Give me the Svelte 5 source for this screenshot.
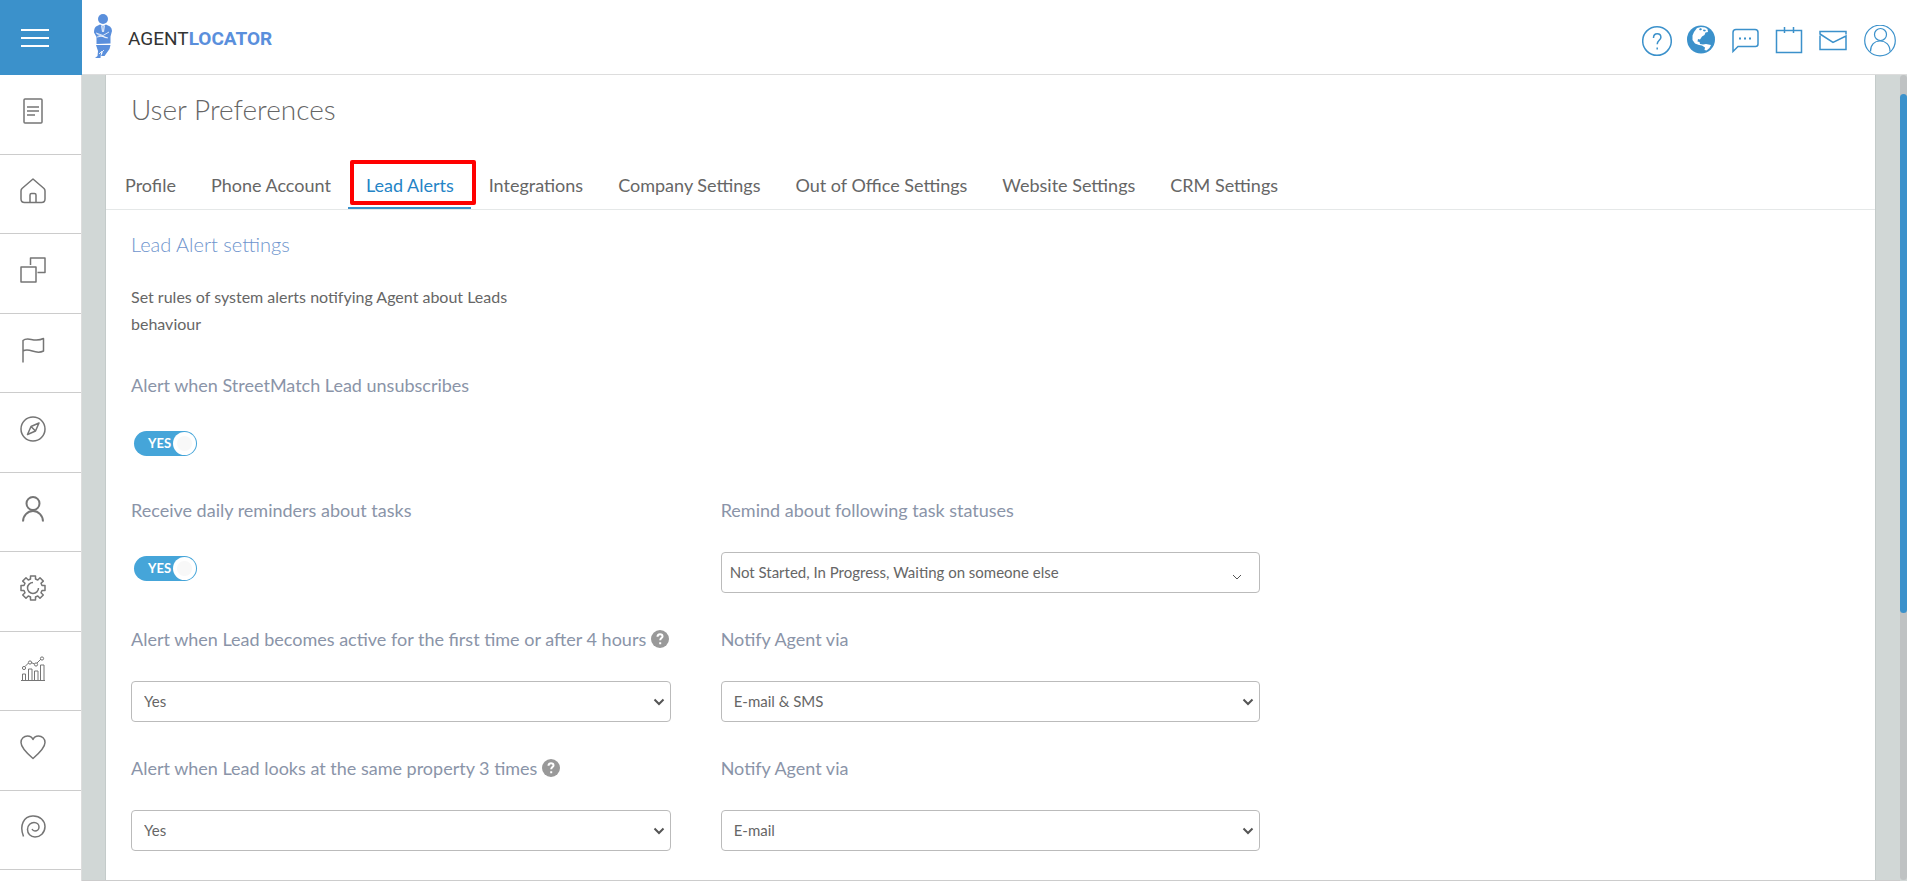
<script>
	let active = $state('Lead Alerts')
	let unsubscribeAlert = $state(true)
	let dailyReminders = $state(true)

	const tabs = [
		'Profile',
		'Phone Account',
		'Lead Alerts',
		'Integrations',
		'Company Settings',
		'Out of Office Settings',
		'Website Settings',
		'CRM Settings'
	]

	const menu = [
		'Pages',
		'Home',
		'Listings',
		'Campaigns',
		'Explore',
		'Contacts',
		'Settings',
		'Reports',
		'Favourites',
		'Activity'
	]

	const alerts = [
		{
			id: 'active',
			text: 'Alert when Lead becomes active for the first time or after 4 hours',
			via: 'E-mail & SMS'
		},
		{ id: 'property', text: 'Alert when Lead looks at the same property 3 times', via: 'E-mail' }
	]

	const answers = ['Yes', 'No']
	const channels = ['E-mail & SMS', 'E-mail', 'SMS']
</script>

{#snippet menuIcon(name)}
	<svg class="menu-icon" viewBox="0 0 26 26" aria-hidden="true">
		{#if name === 'Pages'}
			<rect x="4" y="1" width="18" height="24" rx="1" />
			<path d="M7 9h12M7 13h12M7 17h8" />
		{:else if name === 'Home'}
			<path d="M13 1 2 10.5Q1 11.5 1 13v8q0 3.5 3.5 3.5h17Q25 24.5 25 21v-8q0-1.500-1-2.500ZM10 24.500V17q0-1.500 1.500-1.500h3Q16 15.500 16 17v7.500" />
		{:else if name === 'Listings'}
			<rect x="1" y="10" width="15" height="15" />
			<path d="M10.5 8V1H25v14.5h-7.5" />
		{:else if name === 'Campaigns'}
			<path d="M3 25.5V3.500C8-1 14 6 23.500 1.500V14C15 18.500 10 10 3 14" />
		{:else if name === 'Explore'}
			<circle cx="13" cy="13" r="12" />
			<path d="M19 7 11 10.5 7.5 18.5 15.5 15ZM11 10.5l4.5 4.5" />
		{:else if name === 'Contacts'}
			<g stroke-width="2">
				<circle cx="13" cy="7.5" r="6.5" />
				<path d="M3 25.500a10 10.500 0 0 1 20 0" />
			</g>
		{:else if name === 'Settings'}
			<path d="M10.5 1h5v3l2.300 1 2.200-2.200 3.300 3.300L21 8.300l1 2.200h3v5h-3l-1 2.300 2.300 2.200-3.300 3.300-2.200-2.300-2.300 1v3h-5v-3l-2.200-1L6 23.300 2.700 20 5 17.800l-1-2.300H1v-5h3l1-2.200-2.300-2.200L6 2.800 8.300 5l2.200-1Z" />
			<path d="M13 7.5A5.5 5.5 0 1 0 18.5 13" />
		{:else if name === 'Reports'}
			<g stroke-width="1">
				<path d="M1 25.5h24M2.5 25v-6h3v6M8.500 25V14h3.500v11M14.500 25v-9h3.500v9M20.500 25V10H24v15M5 11.500l3.500-3.500M11 7.500l3.500 1.500M17 8l4-4" />
				<circle cx="4" cy="13" r="1.6" />
				<circle cx="10" cy="7.5" r="1.6" />
				<circle cx="16" cy="9.5" r="1.6" />
				<circle cx="22" cy="3.5" r="1.6" />
			</g>
		{:else if name === 'Favourites'}
			<path d="M13 24.5C6 18.500 1 13.500 1 8.500 1 4.500 4 2 7.500 2c2.500 0 4.500 1 5.500 3.500C14 3 16 2 18.500 2 22 2 25 4.500 25 8.500c0 5-5 10-12 16Z" />
		{:else}
			<path d="M3.500 22.500C-1 11 4 2.500 12.500 2 20 1.500 25 7 25 12.500 25 19 20 23 15 23 10.500 23 7.500 19.500 7.500 15.500 7.500 11 11 8.500 14 8.500 17 8.500 19 10.500 19 13c0 2.500-2 4-4 4-1.500 0-2.500-1-3-2" />
		{/if}
	</svg>
{/snippet}

{#snippet help()}
	<svg class="help" viewBox="0 0 18 18" role="img" aria-label="Help">
		<circle cx="9" cy="9" r="9" />
		<path d="M6.5 6.8C6.5 5 7.6 4.2 9 4.2c1.500 0 2.500.9 2.500 2.200C11.500 8 9.200 8.300 9.200 10.200M9.200 12.200v2" />
	</svg>
{/snippet}

{#snippet dropdown(id, options, value)}
	<div class="select">
		<select {id}>
			{#each options as option}
				<option selected={option === value}>{option}</option>
			{/each}
		</select>
		<svg class="arrow" viewBox="0 0 12 8" aria-hidden="true"><path d="M1.5 1.5 6 6l4.5-4.5" /></svg>
	</div>
{/snippet}

<div class="app">
	<header>
		<button class="burger" aria-label="Menu"><i></i><i></i><i></i></button>
		<a class="logo" href="#home">
			<svg viewBox="0 0 18 44" aria-hidden="true">
				<circle cx="9" cy="5" r="5" />
				<path d="M6 10.500 9 12l3-1.500 4 2q2 1.500 2 4.500l-1.500 5.500v7L2.500 30V23L0 18.500Q0 14 2 12.500Z" />
				<path d="M2 31h14.500l-1 4-5 7H7l2-4-2 1-.5 5H1l2.500-2 .5-5Z" />
				<path class="cut" d="M9 12v5M7.500 11.500 8.500 18M10.500 11.500 9.500 18M2 19l7 2.500 6-3.500M3 23l5-1 6 2M3.500 20.500l9 3.500M2.500 30.500h14M10 36l-3 3M5 40l3-3" />
			</svg>
			<span>AGENT<b>LOCATOR</b></span>
		</a>
		<nav class="tools" aria-label="Tools">
			<a href="#help" aria-label="Help">
				<svg viewBox="0 0 30 32">
					<circle cx="15" cy="16" r="14.3" />
					<path d="M11.5 13c0-2.800 1.500-4.300 3.700-4.300s3.700 1.400 3.700 3.500c0 3-3.700 3.300-3.700 7M15.200 22.500v2" />
				</svg>
			</a>
			<a href="#site" aria-label="Website">
				<svg viewBox="0 0 30 32">
					<circle class="solid" cx="15" cy="14.5" r="14" />
					<path class="land" d="M8 7l3-4 4-1 4 .5 2.500 1.500L22 7l-2.500.5-1 2.500-2.500 1.500-2 3-2-.5-.5 2.500 2 .5.5 2 3 .5 3-.5L25 20l-1.500 3-3 2.500-2-.5.5-2.500-3-2-3-.500L9 18.500 6.500 15V10.500Z" />
					<path class="solid" d="M13 4l2-1 1 1.500-2 1ZM17.500 4.500l2.500.5-1 1.500-2-.5Z" />
				</svg>
			</a>
			<a href="#chat" aria-label="Messages">
				<svg viewBox="0 0 30 32">
					<path d="M3 26.5V7.500q0-3 3-3h19q3 0 3 3V19q0 2.500-2.500 2.500H8Z" />
					<path class="solid" d="M9 12.5h2v2H9zM14 12.500h2v2h-2zM19 12.500h2v2h-2z" />
				</svg>
			</a>
			<a href="#calendar" aria-label="Calendar">
				<svg viewBox="0 0 30 32"><path d="M2.5 5.5h25v22h-25zM10.5 2v6M19.5 2v6" /></svg>
			</a>
			<a href="#mail" aria-label="Mail">
				<svg viewBox="0 0 30 32"><path d="M28 9.5V6.5H2v2.5l13 8.5 13-6.500v13.500H2V10.500" /></svg>
			</a>
			<a class="account" href="#account" aria-label="Account">
				<svg viewBox="0 0 32 32">
					<circle cx="16" cy="15.5" r="15.3" />
					<circle cx="16.5" cy="9.5" r="6" />
					<path d="M6.5 26.5C6.5 19.5 10.5 16 16 16s10 3.500 10 10.500" />
				</svg>
			</a>
		</nav>
	</header>

	<div class="body">
		<nav class="sidebar" aria-label="Main menu">
			{#each menu as name}
				<a href="#{name.toLowerCase()}" aria-label={name}>{@render menuIcon(name)}</a>
			{/each}
		</nav>

		<main>
			<div class="panel">
				<h1>User Preferences</h1>

				<div class="tabs" role="tablist">
					{#each tabs as tab}
						<button
							role="tab"
							class:active={tab === active}
							aria-selected={tab === active}
							onclick={() => (active = tab)}
						>
							{tab}
						</button>
					{/each}
				</div>

				<section>
					<h2>Lead Alert settings</h2>
					<p>Set rules of system alerts notifying Agent about Leads behaviour</p>
				</section>

				<div class="row">
					<div class="field">
						<label for="unsubscribe">Alert when StreetMatch Lead unsubscribes</label>
						<div class="switch">
							<input id="unsubscribe" type="checkbox" bind:checked={unsubscribeAlert} />
							<span class="state">{unsubscribeAlert ? 'YES' : 'NO'}</span>
						</div>
					</div>
				</div>

				<div class="row">
					<div class="field">
						<label for="reminders">Receive daily reminders about tasks</label>
						<div class="switch">
							<input id="reminders" type="checkbox" bind:checked={dailyReminders} />
							<span class="state">{dailyReminders ? 'YES' : 'NO'}</span>
						</div>
					</div>
					<div class="field">
						<label for="statuses">Remind about following task statuses</label>
						<div class="select statuses">
							<select id="statuses">
								<option>Not Started, In Progress, Waiting on someone else</option>
							</select>
							<svg class="arrow" viewBox="0 0 10 6" aria-hidden="true"><path d="M1 1l4 4 4-4" /></svg>
						</div>
					</div>
				</div>

				{#each alerts as alert}
					<div class="row">
						<div class="field">
							<label for={alert.id}>{alert.text} {@render help()}</label>
							{@render dropdown(alert.id, answers, 'Yes')}
						</div>
						<div class="field">
							<label for="{alert.id}-via">Notify Agent via</label>
							{@render dropdown(alert.id + '-via', channels, alert.via)}
						</div>
					</div>
				{/each}
			</div>
		</main>

		<div class="scrollbar"><div class="thumb"></div></div>
	</div>
</div>

<style>
	:global(body) {
		margin: 0;
		background: #fff;
	}

	.app {
		display: flex;
		flex-direction: column;
		height: 100vh;
		overflow: hidden;
		font-family: Lato, sans-serif;
		font-size: 16px;
		color: #666;
	}

	.app * {
		box-sizing: border-box;
	}

	button,
	select {
		font: inherit;
		color: inherit;
		background: none;
		border: 0;
	}

	header {
		display: flex;
		flex: none;
		height: 75px;
	}

	.burger {
		display: flex;
		flex-direction: column;
		gap: 6px;
		width: 82px;
		padding: 29px 0 0 21px;
		background: #3b91cb;
	}

	.burger i {
		width: 28px;
		height: 2px;
		background: #fff;
	}

	.logo {
		display: flex;
		flex: 1;
		gap: 16px;
		padding: 14px 0 0 12px;
		border-bottom: 1px solid #ddd;
		font-family: Roboto, sans-serif;
		font-size: 19px;
		line-height: 50px;
		color: #333;
		text-decoration: none;
	}

	.logo b {
		color: #5a8fdc;
	}

	.logo svg {
		width: 18px;
		height: 44px;
		fill: #5a8fdc;
	}

	.logo .cut {
		fill: none;
		stroke: #fff;
		stroke-width: 0.8;
	}

	.tools {
		display: flex;
		gap: 14px;
		padding: 25px 11px 0 0;
		border-bottom: 1px solid #ddd;
	}

	.tools svg {
		display: block;
		width: 30px;
		height: 32px;
		fill: none;
		stroke: #3b91cb;
		stroke-width: 1.5;
	}

	.tools .solid {
		fill: #3b91cb;
		stroke: none;
	}

	.tools .land {
		fill: #fff;
		stroke: none;
	}

	.tools .account {
		margin-left: 2px;
	}

	.account svg {
		width: 32px;
		stroke-width: 1.2;
	}

	.body {
		display: flex;
		flex: 1;
		min-height: 0;
		background: #d1d7d6;
	}

	.sidebar {
		flex: none;
		width: 82px;
		overflow: hidden;
		background: #fff;
		border-right: 1px solid #ddd;
	}

	.sidebar a {
		display: block;
		height: 80px;
		padding: 23px 0 0 20px;
		border-bottom: 1px solid #ccc;
	}

	.sidebar a:nth-child(even) {
		height: 79px;
	}

	.menu-icon {
		display: block;
		width: 26px;
		height: 26px;
		fill: none;
		stroke: #757575;
		stroke-width: 1.5;
		stroke-linejoin: round;
	}

	main {
		display: flex;
		flex: 1;
		padding: 0 24px 0 23px;
		overflow: hidden;
		border-bottom: 1px solid #ccc;
	}

	.panel {
		flex: 1;
		background: #fff;
		border: solid #c4cbca;
		border-width: 0 1px;
	}

	h1 {
		margin: 0;
		padding: 16px 25px 0;
		font-size: 28px;
		font-weight: 300;
		line-height: 36px;
	}

	.tabs {
		display: flex;
		margin-top: 32px;
		padding-left: 1px;
		border-bottom: 1px solid #e5e8e8;
	}

	.tabs button {
		position: relative;
		padding: 12px 17px 8px 18px;
		font-size: 18px;
		line-height: 28px;
		border-bottom: 2px solid transparent;
		cursor: pointer;
	}

	.tabs .active {
		color: #2484c6;
		border-color: #3b91cb;
	}

	/* red marker around the open tab */
	.tabs .active::after {
		content: '';
		position: absolute;
		inset: 1px -5px 2px 2px;
		border: 4px solid #f00;
		border-radius: 2px;
	}

	section {
		padding: 20px 25px 0;
	}

	h2 {
		margin: 0;
		font-size: 20px;
		font-weight: 300;
		line-height: 28px;
		color: #6e94cd;
	}

	p {
		width: 400px;
		margin: 25px 0 34px;
		line-height: 27px;
	}

	.row {
		display: grid;
		grid-template-columns: repeat(3, 1fr);
		margin-bottom: 32px;
	}

	.row:nth-of-type(2) {
		margin-bottom: 28px;
	}

	.field {
		padding: 0 25px;
	}

	.field > label {
		display: block;
		height: 56px;
		font-size: 18px;
		line-height: 28px;
		color: #8a94a8;
		white-space: nowrap;
	}

	.help {
		width: 18px;
		height: 18px;
		vertical-align: -2px;
		fill: #999;
	}

	.help path {
		fill: none;
		stroke: #fff;
		stroke-width: 2;
	}

	.switch {
		display: grid;
		width: 63px;
		margin: 4px 0 12px 3px;
	}

	.switch input,
	.state {
		grid-area: 1 / 1;
	}

	.switch input {
		display: flex;
		justify-content: flex-start;
		width: 63px;
		height: 25px;
		margin: 0;
		padding: 1px;
		appearance: none;
		background: #bbb;
		border-radius: 13px;
		cursor: pointer;
	}

	.switch input::before {
		content: '';
		width: 23px;
		height: 23px;
		background: radial-gradient(#f8f8f8 7px, #fff 8px);
		border-radius: 50%;
	}

	.switch input:checked {
		justify-content: flex-end;
		background: #45a5d9;
	}

	.state {
		padding-left: 14px;
		font-size: 13px;
		font-weight: 700;
		line-height: 24px;
		color: #fff;
		pointer-events: none;
	}

	.select {
		display: grid;
		align-items: center;
	}

	.select select,
	.select .arrow {
		grid-area: 1 / 1;
	}

	.select select {
		width: 100%;
		height: 41px;
		padding: 0 30px 2px 12px;
		font-size: 15px;
		border: 1px solid #bbb;
		border-radius: 4px;
		appearance: none;
	}

	.arrow {
		justify-self: end;
		width: 12px;
		height: 8px;
		margin-right: 6px;
		fill: none;
		stroke: #555;
		stroke-width: 2;
		pointer-events: none;
	}

	.statuses select {
		padding-left: 8px;
	}

	.statuses .arrow {
		width: 10px;
		height: 6px;
		margin: 9px 18px 0 0;
		stroke-width: 1;
	}

	.scrollbar {
		flex: none;
		width: 7px;
		margin-bottom: 1px;
		padding-top: 19px;
		background: #bfc2c3;
		border-radius: 4px;
	}

	.thumb {
		height: 66%;
		background: #3b91cb;
		border-radius: 4px;
	}
</style>
